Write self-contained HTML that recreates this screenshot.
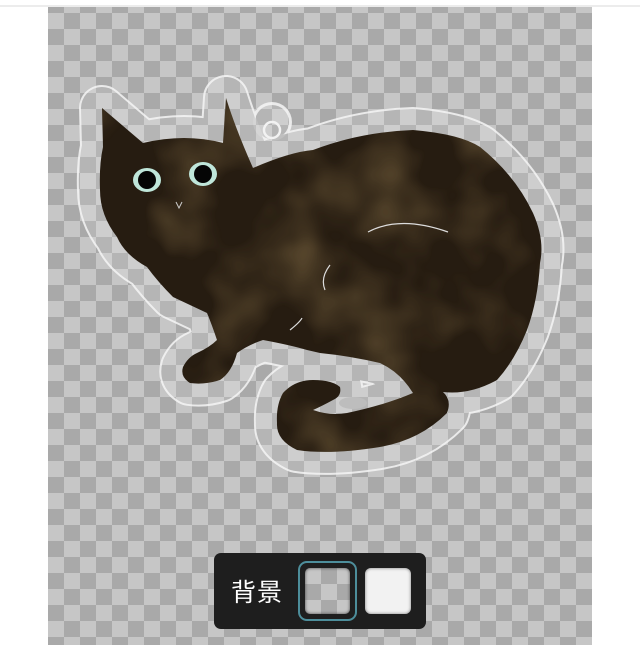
<!DOCTYPE html>
<html><head><meta charset="utf-8"><style>
html,body{margin:0;padding:0;background:#fff;width:640px;height:666px;overflow:hidden;position:relative;font-family:"Liberation Sans","Noto Sans CJK JP",sans-serif}
.line{position:absolute;left:0;top:5px;width:640px;height:2px;background:#ececec}
.chk{position:absolute;left:48px;top:7px;width:544px;height:638px;
background-color:#c6c6c6;
background-image:linear-gradient(45deg,#a9a9a9 25%,transparent 25%,transparent 75%,#a9a9a9 75%),linear-gradient(45deg,#a9a9a9 25%,transparent 25%,transparent 75%,#a9a9a9 75%);
background-size:32px 32px;background-position:0 6px,16px 22px}
svg{position:absolute;left:0;top:0}
.bar{position:absolute;left:214px;top:553px;width:212px;height:76px;background:#1e1e1e;border-radius:7px}
.t{position:absolute;left:17px;top:20px;color:#fff;font-size:25px;letter-spacing:1px}
.s1{position:absolute;left:84px;top:8px;width:55px;height:56px;border:2px solid #4d8e9b;border-radius:9px}
.s1 i{position:absolute;left:5px;top:5px;width:45px;height:46px;border-radius:5px;box-shadow:inset 0 0 3px #444;
background-color:#c6c6c6;background-image:linear-gradient(45deg,#a9a9a9 25%,transparent 25%,transparent 75%,#a9a9a9 75%),linear-gradient(45deg,#a9a9a9 25%,transparent 25%,transparent 75%,#a9a9a9 75%);background-size:32px 32px;background-position:0 0,16px 16px}
.s2{position:absolute;left:151px;top:15px;width:46px;height:46px;background:#f2f2f2;border-radius:6px;box-shadow:inset 0 0 3px #777}
</style></head><body>
<div class="line"></div>
<div class="chk"></div>
<svg width="640" height="666" viewBox="0 0 640 666">
<defs>
<path id="c" d="M102,108 L143,143 Q185,133 223,143 L226,98 Q236,130 253,168 Q290,152 313,150 Q360,132 413,130 Q460,134 480,147 Q515,175 533,213 Q545,240 540,263 Q538,300 527,330 Q515,360 497,380 Q470,395 443,392 Q452,400 447,413 Q420,440 380,447 Q330,455 297,450 Q276,440 277,423 Q276,405 283,393 Q295,380 313,380 Q332,380 340,387 Q342,396 333,400 Q322,406 313,410 Q330,416 347,413 Q385,405 413,393 Q400,372 380,363 Q350,356 320,353 L307,350 Q290,345 263,340 Q248,345 237,353 Q232,372 220,380 Q205,385 190,383 Q180,377 183,367 Q188,357 197,353 Q210,347 217,340 Q212,325 207,313 Q190,305 173,297 Q158,282 147,267 Q125,255 117,237 Q100,215 100,190 Q99,165 103,147 Z"/>
<mask id="m"><rect width="640" height="666" fill="black"/>
<use href="#c" fill="white" stroke="white" stroke-width="46" stroke-linejoin="round"/>
<circle cx="272" cy="122" r="20" fill="white"/>
<use href="#c" fill="black" stroke="black" stroke-width="42" stroke-linejoin="round"/>
<circle cx="272" cy="122" r="17" fill="black"/>
</mask>
<filter id="n" x="0" y="0" width="100%" height="100%"><feTurbulence type="fractalNoise" baseFrequency="0.012" numOctaves="3" seed="4"/><feColorMatrix type="matrix" values="0 0 0 0 0.3  0 0 0 0 0.2  0 0 0 0 0.08  0 0 0 1.3 -0.55"/></filter>
<clipPath id="cp"><use href="#c"/></clipPath>
</defs>
<use href="#c" fill="rgba(255,255,255,0.14)" stroke="rgba(255,255,255,0.14)" stroke-width="44" stroke-linejoin="round"/>
<circle cx="272" cy="122" r="19" fill="rgba(255,255,255,0.14)"/>
<rect width="640" height="666" fill="rgba(245,245,245,0.85)" mask="url(#m)"/>
<circle cx="272" cy="130" r="8" fill="none" stroke="#f2f2f2" stroke-width="2.5"/>
<use href="#c" fill="#261c11"/>
<g clip-path="url(#cp)"><rect x="90" y="90" width="470" height="370" filter="url(#n)" opacity="0.8"/></g>
<path d="M368,232 Q400,215 448,232 M330,265 Q320,278 325,290 M290,330 Q300,322 302,318" stroke="#ddd" stroke-width="1.2" fill="none"/>
<ellipse cx="353" cy="403" rx="14" ry="6" fill="#bdbdbd"/>
<ellipse cx="147" cy="180" rx="14" ry="12" fill="#bfe6da"/><circle cx="147" cy="180" r="9" fill="#050505"/>
<ellipse cx="203" cy="174" rx="14" ry="12" fill="#bfe6da"/><circle cx="203" cy="174" r="9" fill="#050505"/>
<path d="M176,202 L179,208 L182,202" stroke="#ccc" stroke-width="1" fill="none"/>
</svg>
<div class="bar"><div class="t">背景</div><div class="s1"><i></i></div><div class="s2"></div></div>
</body></html>
